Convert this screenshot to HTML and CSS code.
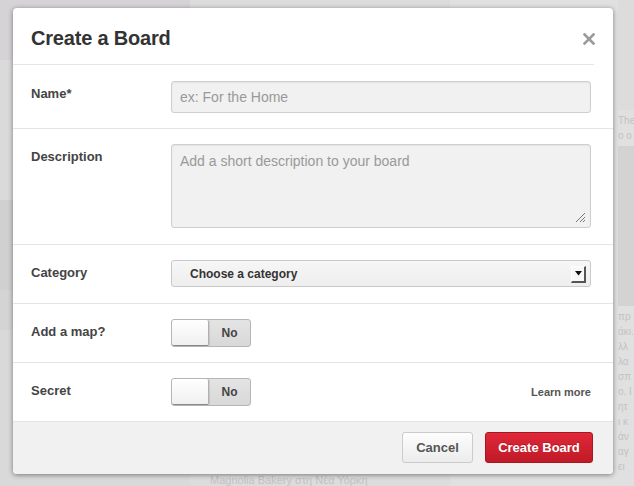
FILE: index.html
```html
<!DOCTYPE html>
<html>
<head>
<meta charset="utf-8">
<link rel="stylesheet" href="styles.css">
</head>
<body>
<div class="page">
  <div class="col col-a">
    <div class="blk b1"></div>
    <div class="blk b2"></div>
    <div class="blk b3"></div>
    <div class="blk b4"></div>
  </div>
  <div class="col col-b">
    <div class="bgtext bottom">Magnolia Bakery στη Νέα Υόρκη</div>
  </div>
  <div class="col col-c">
    <div class="blk b6"></div>
    <div class="bgtext">The<br>ο ο</div>
    <div class="blk b7"></div>
    <div class="bgtext">πρ<br>άκι.<br>λλ<br>λα<br>σπ<br>ο. Ι<br>ητ<br>ι κ<br>άν<br>αγ<br>ει</div>
  </div>
</div>

<div class="modal">
  <div class="header">
    <h1 class="title">Create a Board</h1>
    <svg class="close" width="12" height="12" viewBox="0 0 12 12"><path d="M1.5 1.5 L10.5 10.5 M10.5 1.5 L1.5 10.5" stroke="#9a9a9a" stroke-width="2.6" stroke-linecap="square"/></svg>
  </div>

  <div class="row row-name">
    <div class="label">Name*</div>
    <div class="field"><div class="input">ex: For the Home</div></div>
  </div>

  <div class="row row-tall">
    <div class="label">Description</div>
    <div class="field">
      <div class="textarea">Add a short description to your board
        <svg class="grip" width="12" height="12" viewBox="0 0 12 12"><path d="M11 2 L2 11 M11 6 L6 11 M11 9 L9 11" stroke="#777" stroke-width="1"/></svg>
      </div>
    </div>
  </div>

  <div class="row row-tall">
    <div class="label">Category</div>
    <div class="field">
      <div class="select"><span>Choose a category</span><span class="arrow"><svg width="7" height="5" viewBox="0 0 7 5"><path d="M0 0 H7 L3.5 4.5 Z" fill="#111"/></svg></span></div>
    </div>
  </div>

  <div class="row">
    <div class="label">Add a map?</div>
    <div class="field">
      <div class="toggle"><span class="knob"></span><span class="state">No</span></div>
    </div>
  </div>

  <div class="row">
    <div class="label">Secret</div>
    <div class="field split">
      <div class="toggle"><span class="knob"></span><span class="state">No</span></div>
      <span class="learn">Learn more</span>
    </div>
  </div>

  <div class="footer">
    <button class="btn cancel">Cancel</button>
    <button class="btn create">Create Board</button>
  </div>
</div>
</body>
</html>
```

FILE: styles.css
```css
* { box-sizing: border-box; }
html, body { margin: 0; padding: 0; }
body {
  width: 634px;
  height: 486px;
  overflow: hidden;
  font-family: "Liberation Sans", Arial, sans-serif;
  background: #dedede;
  position: relative;
}
.page {
  display: flex;
  height: 486px;
  overflow: hidden;
}
.col { display: flex; flex-direction: column; overflow: hidden; }
.col-a { width: 190px; background: #d9d9d9; }
.col-b { width: 260px; background: #dcdcdc; justify-content: flex-end; }
.col-c { flex: 1; background: #e0e0e0; padding-left: 168px; }
.blk { flex: none; }
.b1 { height: 60px; background: #d6d3d6; }
.b2 { height: 140px; background: #dadada; }
.b3 { height: 90px; background: #cfd0cf; }
.b4 { height: 40px; background: #d4d4d4; }
.b6 { height: 110px; background: #dcdcdc; }
.b7 { height: 160px; background: #d3d3d3; }
.bgtext {
  color: #c2c2c2;
  font-size: 10px;
  line-height: 15px;
  padding: 3px 0;
  white-space: nowrap;
}
.bgtext.bottom {
  padding: 0;
  margin-left: 20px;
  font-size: 11px;
  line-height: 12px;
  margin-bottom: 0;
}

.modal {
  position: absolute;
  left: 13px;
  top: 8px;
  width: 600px;
  height: 466px;
  background: #fff;
  border-radius: 4px;
  box-shadow: 0 1px 5px rgba(0,0,0,0.45);
  overflow: hidden;
  display: flex;
  flex-direction: column;
}
.header {
  height: 57px;
  flex: none;
  margin-right: 19px;
  padding: 5px 0 0 18px;
  border-bottom: 1px solid #e6e6e6;
  display: flex;
  align-items: center;
  justify-content: space-between;
}
.title {
  margin: 0;
  font-size: 20px;
  font-weight: bold;
  color: #333;
  letter-spacing: -0.2px;
  padding-bottom: 1px;
}
.close { margin-right: -1px; }

.row {
  display: flex;
  flex: none;
  padding: 15px 22px 15px 18px;
  border-bottom: 1px solid #e4e4e4;
}
.row-name { padding-top: 16px; }
.row-tall { padding-bottom: 16px; }
.label {
  width: 140px;
  flex: none;
  font-size: 13px;
  line-height: 14px;
  font-weight: bold;
  color: #444;
  margin-top: 6px;
}
.field { flex: 1; display: flex; align-items: center; }
.field.split { justify-content: space-between; }

.input, .textarea {
  width: 420px;
  background: #f1f1f1;
  border: 1px solid #cfcfcf;
  border-radius: 3px;
  box-shadow: inset 0 1px 2px rgba(0,0,0,0.06);
  color: #999;
  font-size: 14px;
  padding-left: 8px;
}
.input { height: 32px; line-height: 30px; }
.textarea {
  height: 84px;
  line-height: 17px;
  padding-top: 8px;
  position: relative;
  align-self: flex-start;
}
.grip { position: absolute; right: 4px; bottom: 4px; }

.select {
  width: 420px;
  height: 27px;
  background: linear-gradient(#f6f6f6, #eeeeee);
  border: 1px solid #c9c9c9;
  border-radius: 3px;
  display: flex;
  align-items: center;
  justify-content: space-between;
  padding: 0 4px 0 18px;
  font-size: 12px;
  font-weight: bold;
  color: #333;
}
.arrow {
  width: 15px;
  height: 17px;
  background: #f8f8f8;
  border-right: 2px solid #555;
  border-bottom: 2px solid #555;
  border-top: 1px solid #fff;
  border-left: 1px solid #fff;
  display: flex;
  align-items: center;
  justify-content: center;
  margin-top: 1px;
}

.toggle {
  width: 80px;
  height: 28px;
  border: 1px solid #b5b5b5;
  border-radius: 3px;
  background: linear-gradient(#e4e4e4, #d8d8d8);
  display: flex;
  overflow: hidden;
}
.knob {
  width: 37px;
  height: 100%;
  background: linear-gradient(#ffffff, #f0f0f0);
  border-right: 1px solid #b0b0b0;
  border-bottom: 1px solid #888;
  border-radius: 2px;
  box-shadow: 1px 0 1px rgba(0,0,0,0.1);
}
.state {
  flex: 1;
  text-align: center;
  font-size: 12px;
  font-weight: bold;
  color: #444;
  line-height: 27px;
}
.learn {
  font-size: 11px;
  font-weight: bold;
  color: #555;
}

.footer {
  flex: 1;
  background: #f1f1f1;
  display: flex;
  justify-content: flex-end;
  align-items: flex-start;
  gap: 12px;
  padding: 10px 20px 0 0;
}
.btn {
  height: 31px;
  border-radius: 3px;
  font-family: "Liberation Sans", Arial, sans-serif;
  font-size: 13px;
  font-weight: bold;
  padding: 0;
  cursor: pointer;
}
.cancel {
  width: 71px;
  background: linear-gradient(#fdfdfd, #ececec);
  border: 1px solid #cbcbcb;
  color: #555;
}
.create {
  width: 108px;
  background: linear-gradient(#e0283a, #c01a26);
  border: 1px solid #a8161f;
  color: #fff;
  text-shadow: 0 -1px 0 rgba(0,0,0,0.2);
}
```
